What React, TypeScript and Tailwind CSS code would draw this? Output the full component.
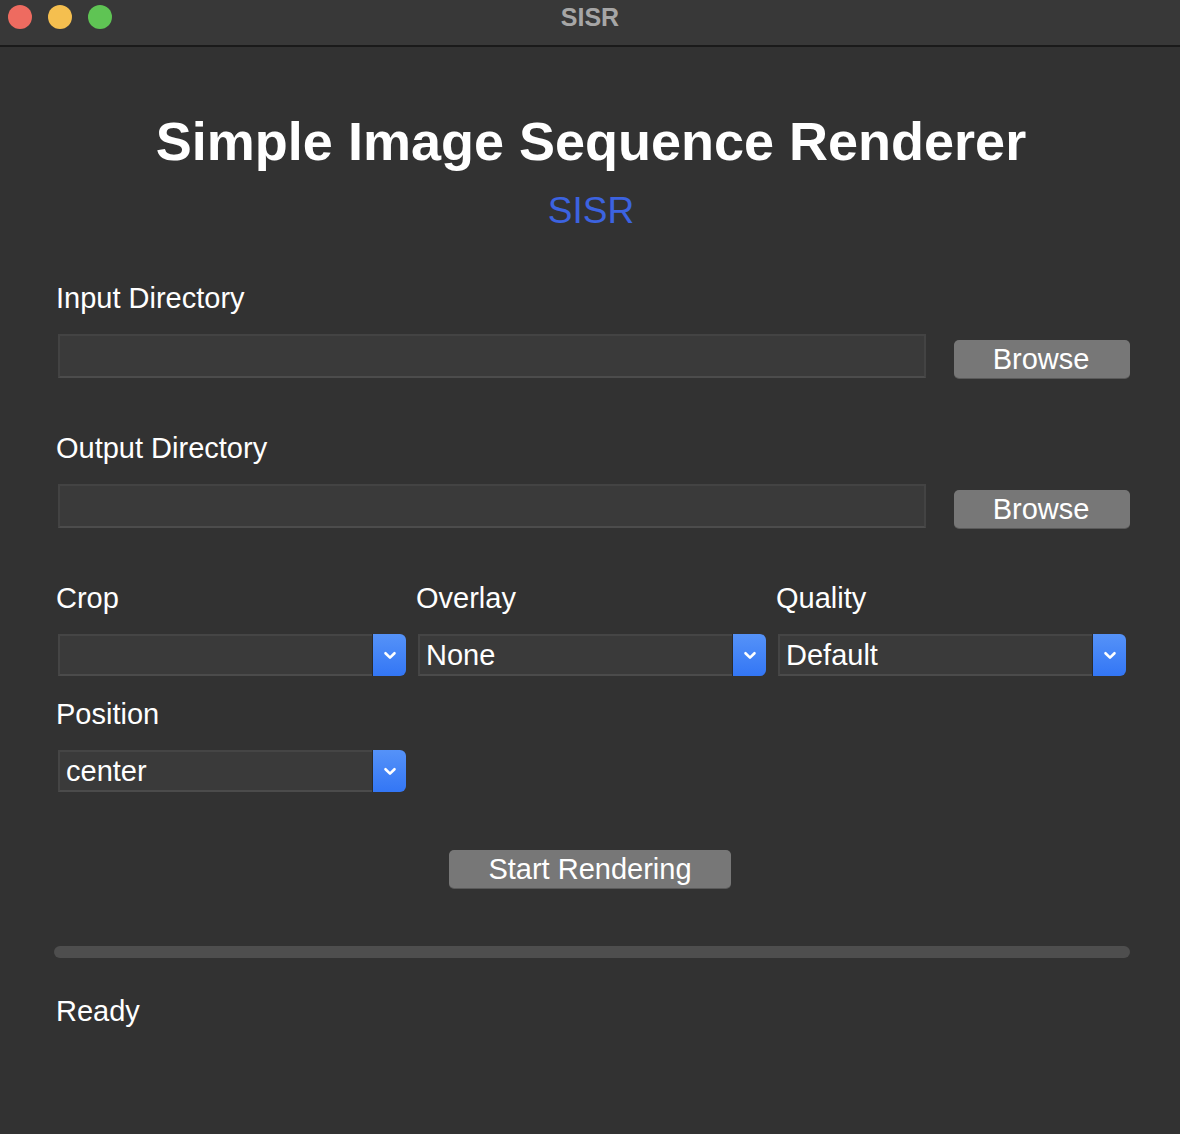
import React from "react";

const font = { fontFamily: '"Liberation Sans", Arial, Helvetica, sans-serif' };

function Chevron() {
  return (
    <svg width="14" height="9" viewBox="0 0 14 9" fill="none">
      <path d="M2.5 2.2 L7 6.6 L11.5 2.2" stroke="white" strokeWidth="2.6" strokeLinecap="round" strokeLinejoin="round" />
    </svg>
  );
}

function Combo({ value }: { value: string }) {
  return (
    <div className="flex h-[42px] w-[348px]">
      <div className="flex-1 flex items-center pl-[6px] bg-[#3a3a3a] border-2 border-r-0 border-[#454545] border-b-[#4b4b4b] text-[29px] leading-none text-white">
        {value}
      </div>
      <div className="w-[34px] h-full flex items-center justify-center rounded-r-[6px] bg-gradient-to-b from-[#5592f8] to-[#3376f5] border-l border-[#2b2b2b]">
        <Chevron />
      </div>
    </div>
  );
}

function Label({ children, className = "" }: { children: React.ReactNode; className?: string }) {
  return <div className={"text-[29px] leading-[29px] text-white -ml-[2px] " + className}>{children}</div>;
}

function DirRow() {
  return (
    <div className="flex items-end">
      <div className="w-[868px] h-[44px] bg-[#3a3a3a] border-2 border-[#434343] border-b-[#4c4c4c]" />
      <button className="ml-[28px] w-[176px] h-[38px] rounded-[5px] bg-[#777777] text-white text-[29px] leading-none shadow-[0_1px_0_#5a5a5a] flex items-center justify-center pr-[2px]">
        Browse
      </button>
    </div>
  );
}

export default function App() {
  return (
    <div style={font} className="w-[1180px] h-[1134px] bg-[#323232] flex flex-col overflow-hidden">
      {/* Title bar */}
      <div className="relative h-[47px] shrink-0 bg-[#383838] border-b-2 border-[#1a1a1a] flex items-start">
        <div className="flex gap-[16px] pl-[8px] pt-[5px]">
          <div className="w-[24px] h-[24px] rounded-full bg-[#ee6b60]" />
          <div className="w-[24px] h-[24px] rounded-full bg-[#f5bf4f]" />
          <div className="w-[24px] h-[24px] rounded-full bg-[#5fc454]" />
        </div>
        <div className="absolute left-0 right-0 top-[5px] text-center text-[25px] leading-[25px] font-bold text-[#a6a6a6]">
          SISR
        </div>
      </div>

      {/* Heading */}
      <div className="mt-[67px] text-center text-[54px] leading-[54px] font-bold text-white pl-[2px]">
        Simple Image Sequence Renderer
      </div>
      <div className="mt-[24px] text-center text-[37px] leading-[37px] text-[#3c63e0] pl-[2px]">SISR</div>

      <div className="pl-[58px] pr-[50px] flex flex-col">
        <Label className="mt-[55px]">Input Directory</Label>
        <div className="mt-[21px]">
          <DirRow />
        </div>

        <Label className="mt-[56px]">Output Directory</Label>
        <div className="mt-[21px]">
          <DirRow />
        </div>

        <div className="mt-[56px] grid grid-cols-[348px_348px_348px] gap-x-[12px]">
          <Label>Crop</Label>
          <Label>Overlay</Label>
          <Label>Quality</Label>
          <div className="mt-[21px]">
            <Combo value="" />
          </div>
          <div className="mt-[21px]">
            <Combo value="None" />
          </div>
          <div className="mt-[21px]">
            <Combo value="Default" />
          </div>
        </div>

        <Label className="mt-[24px]">Position</Label>
        <div className="mt-[21px]">
          <Combo value="center" />
        </div>
      </div>

      <div className="mt-[58px] flex justify-center">
        <button className="w-[282px] h-[38px] rounded-[5px] bg-[#777777] text-white text-[29px] leading-none shadow-[0_1px_0_#5a5a5a] flex items-center justify-center">
          Start Rendering
        </button>
      </div>

      <div className="mt-[58px] ml-[54px] w-[1076px] h-[12px] rounded-full bg-[#4e4e4e]" />

      <div className="pl-[58px] mt-[39px]">
        <Label>Ready</Label>
      </div>
    </div>
  );
}
